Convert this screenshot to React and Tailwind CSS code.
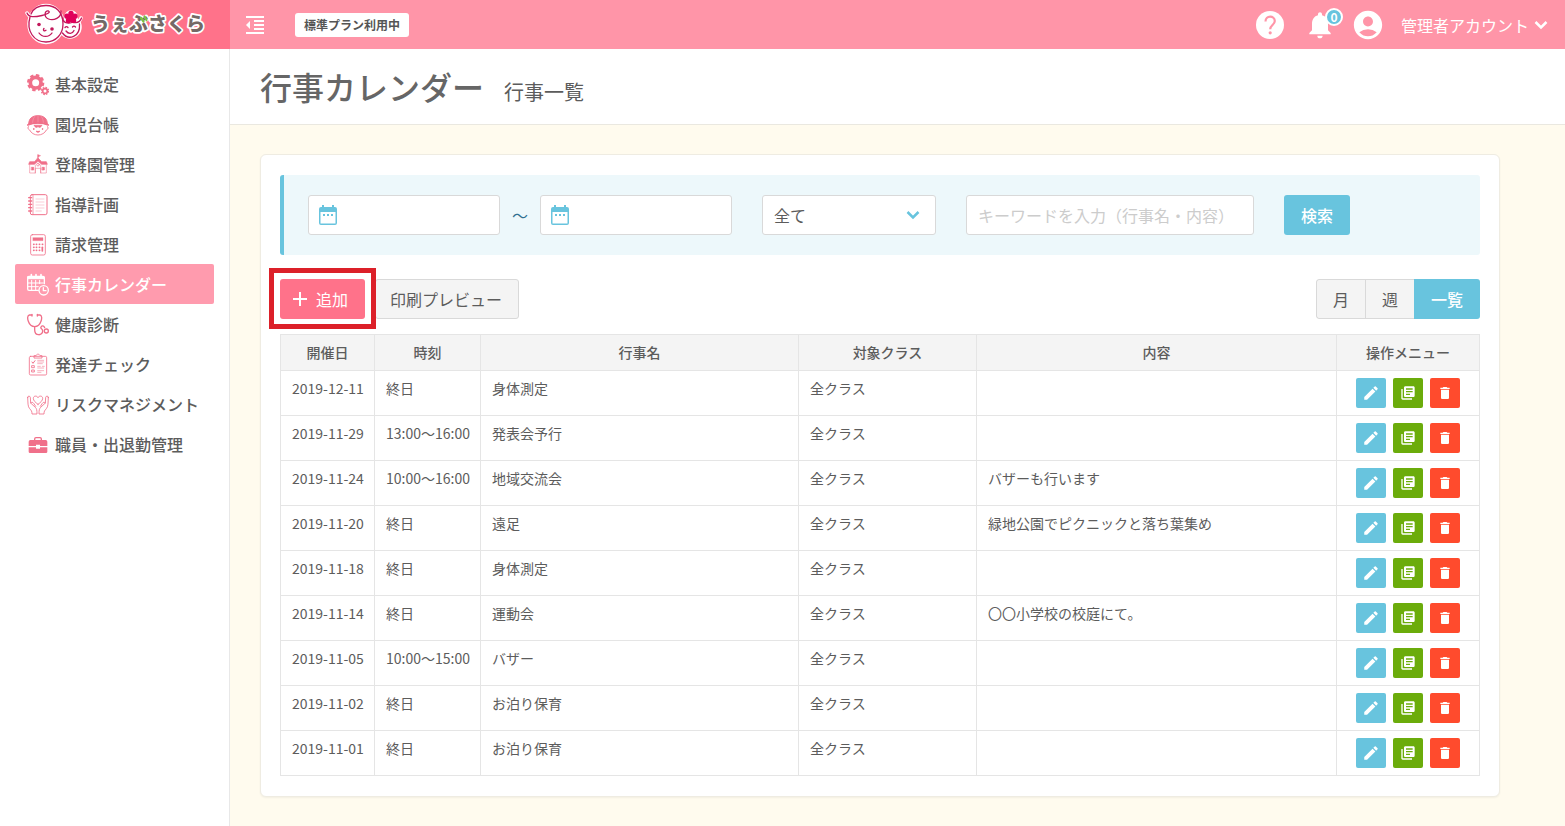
import { useState } from "react";
import {
  MdAccountCircle,
  MdAdd,
  MdDelete,
  MdEdit,
  MdFormatIndentDecrease,
  MdLibraryBooks,
  MdNotifications,
} from "react-icons/md";

const events = [
  { date: "2019-12-11", time: "終日", name: "身体測定", target: "全クラス", note: "" },
  { date: "2019-11-29", time: "13:00～16:00", name: "発表会予行", target: "全クラス", note: "" },
  { date: "2019-11-24", time: "10:00～16:00", name: "地域交流会", target: "全クラス", note: "バザーも行います" },
  { date: "2019-11-20", time: "終日", name: "遠足", target: "全クラス", note: "緑地公園でピクニックと落ち葉集め" },
  { date: "2019-11-18", time: "終日", name: "身体測定", target: "全クラス", note: "" },
  { date: "2019-11-14", time: "終日", name: "運動会", target: "全クラス", note: "〇〇小学校の校庭にて。" },
  { date: "2019-11-05", time: "10:00～15:00", name: "バザー", target: "全クラス", note: "" },
  { date: "2019-11-02", time: "終日", name: "お泊り保育", target: "全クラス", note: "" },
  { date: "2019-11-01", time: "終日", name: "お泊り保育", target: "全クラス", note: "" },
];

const MenuSvg = ({ children }) => (
  <svg
    viewBox="0 -3 66 72"
    className="h-6 w-[22px] shrink-0"
    fill="none"
    stroke="currentColor"
    strokeWidth="3"
    strokeLinecap="round"
    strokeLinejoin="round"
    aria-hidden="true"
  >
    {children}
  </svg>
);

const GearIcon = () => (
  <MenuSvg>
    <circle cx="26" cy="29" r="16" strokeWidth="11" />
    <circle cx="26" cy="29" r="22" strokeWidth="8" strokeDasharray="10 7.28" strokeLinecap="butt" />
    <circle cx="54" cy="54" r="7" strokeWidth="5" />
    <circle cx="54" cy="54" r="10.5" strokeWidth="4" strokeDasharray="4.8 3.45" strokeLinecap="butt" />
  </MenuSvg>
);

const ChildIcon = () => (
  <MenuSvg>
    <path d="M5 34C5 16 16 8 33 8s28 8 28 26c-16-5-40-5-56 0Z" fill="currentColor" />
    <path d="M33 9v20M22 12c-4 6-5 12-5 17M44 12c4 6 5 12 5 17" stroke="#fff" strokeWidth="1" opacity="0.6" />
    <path d="M2 36c18-8 44-8 62 0" strokeWidth="5" />
    <path d="M5 40c-4 2-3 9 3 11 4 9 14 15 25 15s21-6 25-15c6-2 7-9 3-11" strokeWidth="2.5" />
    <path d="M22 38c2 5 9 7 11 2 2 5 9 3 11-2Z" fill="currentColor" />
    <circle cx="20" cy="48" r="1" fill="currentColor" />
    <circle cx="46" cy="48" r="1" fill="currentColor" />
    <path d="M29 55c3 3 5 3 8 0" strokeWidth="4" />
  </MenuSvg>
);

const SchoolIcon = () => (
  <MenuSvg>
    <path d="M33 18V6" />
    <path d="M33 5l8 3-8 4Z" fill="currentColor" strokeWidth="1" />
    <path d="M33 15l11 11h14l3 8H44L33 25 22 34H5l3-8h14Z" fill="currentColor" strokeWidth="2" />
    <path d="M8 35v25h17V36M58 35v25H41V36M25 60V46h16v14" strokeWidth="2" opacity="0.8" />
    <circle cx="33" cy="35" r="4" strokeWidth="2" />
    <path d="M14 43h6v8h-6zM46 43h6v8h-6z" fill="currentColor" strokeWidth="2" />
  </MenuSvg>
);

const NotebookIcon = () => (
  <MenuSvg>
    <rect x="10" y="5" width="50" height="60" rx="5" />
    <path d="M18 6v58" strokeWidth="2" />
    <path d="M5 14h9M5 24h9M5 34h9M5 44h9M5 54h9" strokeWidth="4" />
    <path d="M27 18h24M27 27h24M27 36h24M27 45h24M27 54h16" strokeWidth="1.5" opacity="0.7" />
  </MenuSvg>
);

const CalculatorIcon = () => (
  <MenuSvg>
    <rect x="11" y="5" width="44" height="61" rx="5" strokeWidth="2.5" />
    <rect x="18" y="14" width="30" height="9" fill="currentColor" strokeWidth="1" />
    <path d="M20 34h1M28 34h1M37 34h1M46 34h1M20 43h1M28 43h1M37 43h1M20 52h1M28 52h1M37 52h1" strokeWidth="5" />
    <path d="M46 43v11" strokeWidth="5" />
  </MenuSvg>
);

const ScheduleIcon = () => (
  <MenuSvg>
    <path d="M34 52H6a4 4 0 0 1-4-4V14a4 4 0 0 1 4-4h42a4 4 0 0 1 4 4v18" strokeWidth="4" />
    <path d="M3 11h48v6H3Z" fill="currentColor" />
    <path d="M13 5v8M27 5v8M42 5v8" strokeWidth="5" />
    <path d="M3 30h46M3 41h31M14 22v28M26 22v28M38 22v10" strokeWidth="3" />
    <circle cx="50" cy="52" r="14" strokeWidth="4" />
    <path d="M49 44v9h8" strokeWidth="4" />
  </MenuSvg>
);

const StethoscopeIcon = () => (
  <MenuSvg>
    <path
      d="M14 6H7C1 7 1 17 4 25c3 9 9 16 19 16s16-7 19-16C45 17 45 7 39 6h-7M23 41v9c0 20 24 19 24 4 0-8-8-6-5-12 3-5 9-4 11 2"
      strokeWidth="4"
    />
    <path d="M15 4v5M31 4v5" strokeWidth="4" />
    <circle cx="58" cy="54" r="6" strokeWidth="4" />
  </MenuSvg>
);

const ChecklistIcon = () => (
  <MenuSvg>
    <rect x="7" y="10" width="52" height="56" rx="4" strokeWidth="2.5" />
    <path d="M21 14V8h6c2-6 10-6 12 0h6v6Z" strokeWidth="2.5" />
    <path d="M15 27l3 4 6-8" />
    <path d="M15 38h7v6h-7zM15 51h7v6h-7z" strokeWidth="2.5" />
    <path d="M32 22h18M32 27h18M32 32h14M32 40h8M46 40h6M32 45h18M32 53h18M32 58h10" strokeWidth="2" opacity="0.8" />
  </MenuSvg>
);

const HeartHandsIcon = () => (
  <MenuSvg>
    <path d="M33 34C25 28 19 23 19 16c0-8 11-9 14-2 3-7 14-6 14 2 0 7-6 12-14 18Z" strokeWidth="2.5" />
    <path
      d="M2 13c0-5 7-5 8 0l1 17 14 13c4 4 5 8 5 20H15c0-9-2-10-7-16-6-6-5-18-6-34ZM11 30c3-4 7-2 9 1l6 9"
      strokeWidth="2.5"
    />
    <path
      d="M64 13c0-5-7-5-8 0l-1 17-14 13c-4 4-5 8-5 20h15c0-9 2-10 7-16 6-6 5-18 6-34ZM55 30c-3-4-7-2-9 1l-6 9"
      strokeWidth="2.5"
    />
  </MenuSvg>
);

const BriefcaseIcon = () => (
  <MenuSvg>
    <path d="M23 21v-3a4 4 0 0 1 4-4h12a4 4 0 0 1 4 4v3" strokeWidth="4" />
    <path
      d="M10 21h46a5 5 0 0 1 5 5v13H39v-4H27v4H5V26a5 5 0 0 1 5-5ZM5 43h22v4h12v-4h22v13a4 4 0 0 1-4 4H9a4 4 0 0 1-4-4Z"
      fill="currentColor"
      stroke="none"
    />
  </MenuSvg>
);

const menuItems = [
  { label: "基本設定", icon: GearIcon },
  { label: "園児台帳", icon: ChildIcon },
  { label: "登降園管理", icon: SchoolIcon },
  { label: "指導計画", icon: NotebookIcon },
  { label: "請求管理", icon: CalculatorIcon },
  { label: "行事カレンダー", icon: ScheduleIcon, active: true },
  { label: "健康診断", icon: StethoscopeIcon },
  { label: "発達チェック", icon: ChecklistIcon },
  { label: "リスクマネジメント", icon: HeartHandsIcon },
  { label: "職員・出退勤管理", icon: BriefcaseIcon },
];

const Logo = () => (
  <svg viewBox="0 0 190 49" className="h-[49px] w-[190px]" role="img" aria-label="うぇぶさくら">
    {/* faces */}
    <g fill="#fff" stroke="#fff" strokeWidth="3.500" strokeLinecap="round" strokeLinejoin="round">
      <circle cx="45" cy="27" r="10" />
      <ellipse cx="21" cy="24" rx="17" ry="18.5" />
      <path d="M2 13c2 4 6 5 10 3M56 18c-1 3-3 5-6 5" fill="none" />
      <circle cx="46" cy="17" r="5" />
    </g>
    <g fill="none" stroke="#c2185b" strokeWidth="1.300" strokeLinecap="round" strokeLinejoin="round">
      <path d="M2 13c2 5 8 4 15 2.500 5-1 9-3.500 6.500-4.500-4-1-5 6 0 8 5 2 13-1 12.500-8" />
      <path d="M5 17C1 31 9 42 21 42c10 0 17-8 17-18C38 12 31 5.500 21 5.500 13 5.500 8 9 6 14" />
      <path d="M37.500 33c6 8 18 4 17-9M38 18c-1 4 4 6 9 4.500M56.500 18c-1 3-3 5-7 4.500" />
      <path d="M14 33c3 4.500 10 4.500 13 0M19 28.500c-1.500 2 .5 3 2 1.800" />
      <path d="M41 31c2.500 3.500 6.500 3 8-.5M40 27.500c1-1.200 2-1.200 3 0M47.500 27c1-1.200 2-1.200 3 0" />
    </g>
    <g fill="#c2185b">
      <circle cx="14" cy="24.500" r="1.800" />
      <circle cx="27" cy="29" r="1.800" />
    </g>
    <g fill="#e0005a">
      <circle cx="46" cy="13.500" r="2.700" />
      <circle cx="50" cy="16.300" r="2.700" />
      <circle cx="48.500" cy="20.500" r="2.700" />
      <circle cx="43.500" cy="20.500" r="2.700" />
      <circle cx="42" cy="16.300" r="2.700" />
      <circle cx="46" cy="17.500" r="3" />
    </g>
    <text
      x="66"
      y="31"
      fontSize="19"
      fontWeight="900"
      fill="#746966"
      stroke="#fff"
      strokeWidth="3.500"
      strokeLinejoin="round"
      paintOrder="stroke"
    >
      うぇぶさくら
    </text>
    <path d="M116 18l2.500 3.500M119.500 16.500l2 3.500" stroke="#7cc142" strokeWidth="2.200" strokeLinecap="round" />
  </svg>
);

const HelpIcon = () => (
  <svg viewBox="0 0 28 28" className="size-7" aria-hidden="true">
    <circle cx="14" cy="14" r="14" fill="#fff" />
    <path
      d="M9.500 10.500C9.500 4 18.800 4.300 18.800 10c0 4-4.600 4-4.600 8.200"
      fill="none"
      stroke="#ff95a8"
      strokeWidth="2.2"
    />
    <circle cx="14.200" cy="21.800" r="1.600" fill="#ff95a8" />
  </svg>
);

const CalendarIcon = ({ className }) => (
  <svg viewBox="0 0 24 24" className={className} fill="currentColor" aria-hidden="true">
    <path d="M6 2h2v2h8V2h2v2h1a2 2 0 0 1 2 2v14a2 2 0 0 1-2 2H5a2 2 0 0 1-2-2V6a2 2 0 0 1 2-2h1Zm-1.500 7v11.500h15V9Z" fillRule="evenodd" />
    <path d="M7 11h2v2H7zM11 11h2v2h-2zM15 11h2v2h-2z" />
  </svg>
);

const ChevronIcon = ({ className }) => (
  <svg viewBox="0 0 24 24" className={className} fill="none" stroke="currentColor" strokeWidth="2.500" aria-hidden="true">
    <path d="M6.500 9l5.500 5.500L17.500 9" />
  </svg>
);

const Header = () => (
  <header className="flex h-[49px] bg-[#ff95a8] text-white">
    <a href="#" className="w-[230px] shrink-0 bg-[#ff728a] pl-[25px]">
      <Logo />
    </a>
    <div className="flex flex-1 items-center pr-3 pl-[13px]">
      <button type="button" aria-label="メニューを閉じる">
        <MdFormatIndentDecrease size={24} />
      </button>
      <span className="ml-7 rounded-[3px] bg-white px-[9px] text-xs/6 font-bold text-[#555]">
        標準プラン利用中
      </span>
      <div className="ml-auto flex items-center">
        <button type="button" aria-label="ヘルプ">
          <HelpIcon />
        </button>
        <button type="button" className="relative ml-5" aria-label="お知らせ">
          <MdNotifications size={32} />
          <span className="absolute -top-px right-[-7px] flex size-[18px] items-center justify-center rounded-full border-2 border-white bg-[#68c4de] text-xs/3 font-bold">
            0
          </span>
        </button>
        <button type="button" className="ml-[15px]" aria-label="アカウント">
          <MdAccountCircle size={34} />
        </button>
        <button type="button" className="ml-4 flex items-center text-base">
          管理者アカウント
          <ChevronIcon className="size-6" />
        </button>
      </div>
    </div>
  </header>
);

const Sidebar = () => (
  <nav className="w-[230px] shrink-0 border-r border-[#e8e8e8] bg-white px-[15px] pt-[15px]">
    <ul>
      {menuItems.map(({ label, icon: Icon, active }) => (
        <li key={label}>
          <a
            href="#"
            className={
              active
                ? "flex h-10 items-center gap-[6px] rounded-xs bg-[#ff9bae] pl-3 text-white"
                : "flex h-10 items-center gap-[6px] pl-3 text-[#f0708a]"
            }
          >
            <Icon />
            <span className={active ? "font-medium text-white" : "font-medium text-[#5c5c5c]"}>{label}</span>
          </a>
        </li>
      ))}
    </ul>
  </nav>
);

const DateField = ({ label }) => (
  <div className="relative w-48">
    <CalendarIcon className="absolute top-2 left-2 size-6 text-[#68c4de]" />
    <input
      type="text"
      aria-label={label}
      className="h-10 w-full rounded-[3px] border border-[#d9d9d9] bg-white pr-3 pl-10"
    />
  </div>
);

const SearchForm = () => (
  <form
    className="flex h-20 items-center rounded-[3px] border-l-4 border-[#68c4de] bg-[#edf8fb] pl-6"
    onSubmit={(e) => e.preventDefault()}
  >
    <DateField label="開始日" />
    <span className="mx-3 text-[#31708f]">～</span>
    <DateField label="終了日" />
    <div className="relative ml-[30px] w-[174px]">
      <select
        aria-label="対象クラス"
        className="h-10 w-full appearance-none rounded-[3px] border border-[#d9d9d9] bg-white px-[11px]"
      >
        <option>全て</option>
      </select>
      <ChevronIcon className="pointer-events-none absolute top-2 right-[11px] size-6 text-[#68c4de]" />
    </div>
    <input
      type="text"
      aria-label="キーワード"
      placeholder="キーワードを入力（行事名・内容）"
      className="ml-[30px] h-10 w-72 rounded-[3px] border border-[#d9d9d9] bg-white px-[11px] placeholder:text-[#ccc]"
    />
    <button type="submit" className="ml-[30px] h-10 rounded-[3px] bg-[#68c4de] px-[17px] font-medium text-white">
      検索
    </button>
  </form>
);

const Toolbar = ({ view, onChange }) => (
  <div className="mt-6 flex items-center gap-[10px]">
    <div className="relative">
      <button
        type="button"
        className="flex h-10 items-center gap-1 rounded-[3px] bg-[#ff728a] pr-[17px] pl-2 text-white"
      >
        <MdAdd size={24} />
        追加
      </button>
      <span className="pointer-events-none absolute -inset-x-[11px] -top-[11px] -bottom-[10px] z-10 border-5 border-[#dc2029]" />
    </div>
    <button type="button" className="h-10 rounded-[3px] border border-[#d9d9d9] bg-[#f4f4f4] pr-4 pl-[14px]">
      印刷プレビュー
    </button>
    <div className="ml-auto flex h-10 overflow-hidden rounded-[3px]">
      {["月", "週", "一覧"].map((name) => (
        <button
          key={name}
          type="button"
          onClick={() => onChange(name)}
          className={
            view === name
              ? "bg-[#68c4de] px-[17px] font-medium text-white"
              : "border border-r-0 border-[#d9d9d9] bg-[#f4f4f4] px-4 first:rounded-l-[3px]"
          }
        >
          {name}
        </button>
      ))}
    </div>
  </div>
);

const EventTable = () => (
  <table className="mt-[15px] w-full table-fixed border-collapse text-sm">
    <thead>
      <tr className="h-9 bg-[#f4f4f4] [&>th]:border [&>th]:border-[#e5e5e5] [&>th]:pb-[2px] [&>th]:font-medium">
        <th className="w-[94px]">開催日</th>
        <th className="w-[106px]">時刻</th>
        <th className="w-[318px]">行事名</th>
        <th className="w-[178px]">対象クラス</th>
        <th>内容</th>
        <th className="w-[143px]">操作メニュー</th>
      </tr>
    </thead>
    <tbody>
      {events.map((event) => (
        <tr
          key={event.date}
          className="[&>td]:border [&>td]:border-[#e5e5e5] [&>td]:py-[7px] [&>td]:pl-[11px] [&>td]:align-top"
        >
          <td className="whitespace-nowrap">{event.date}</td>
          <td className="whitespace-nowrap">{event.time}</td>
          <td>{event.name}</td>
          <td>{event.target}</td>
          <td>{event.note}</td>
          <td>
            <div className="flex justify-center gap-[7px] pr-[11px] text-white">
              <button
                type="button"
                aria-label="編集"
                className="flex size-[30px] items-center justify-center rounded-xs bg-[#68c4de]"
              >
                <MdEdit size={18} />
              </button>
              <button
                type="button"
                aria-label="複製"
                className="flex size-[30px] items-center justify-center rounded-xs bg-[#6bac0b]"
              >
                <MdLibraryBooks size={16} />
              </button>
              <button
                type="button"
                aria-label="削除"
                className="flex size-[30px] items-center justify-center rounded-xs bg-[#ff4b2d]"
              >
                <MdDelete size={16} />
              </button>
            </div>
          </td>
        </tr>
      ))}
    </tbody>
  </table>
);

const App = () => {
  const [view, setView] = useState("一覧");

  return (
    <div className="flex min-h-screen flex-col bg-[#fffbee] font-['Noto_Sans_CJK_JP',sans-serif] text-base text-[#5c5c5c]">
      <Header />
      <div className="flex flex-1">
        <Sidebar />
        <main className="min-w-0 flex-1">
          <div className="flex h-[76px] items-baseline gap-5 border-b border-[#eae8e0] bg-white px-[30px] pt-[13px]">
            <h1 className="text-[32px]/[48px] font-medium text-[#666]">行事カレンダー</h1>
            <p className="text-xl">行事一覧</p>
          </div>
          <div className="p-[29px] pl-[30px]">
            {/* Card */}
            <section className="w-full max-w-[1240px] rounded-md border border-[#efece2] bg-white px-[19px] py-5 shadow-xs">
              <SearchForm />
              <Toolbar view={view} onChange={setView} />
              <EventTable />
            </section>
          </div>
        </main>
      </div>
    </div>
  );
};

export default App;
